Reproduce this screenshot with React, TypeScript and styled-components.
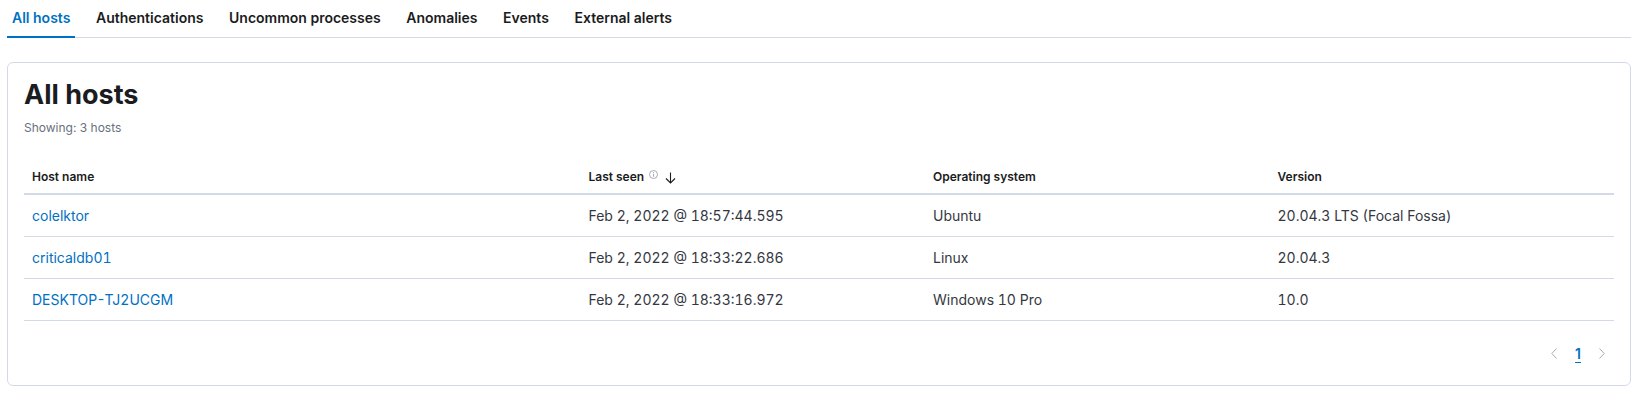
import React from "react";
import styled, { createGlobalStyle } from "styled-components";

const GlobalStyle = createGlobalStyle`
  body {
    margin: 0;
    background: #ffffff;
    font-family: Inter, "Noto Sans", "Liberation Sans", sans-serif;
    color: #1a1c21;
  }
`;

const tabs = [
  "All hosts",
  "Authentications",
  "Uncommon processes",
  "Anomalies",
  "Events",
  "External alerts",
];

const hosts = [
  {
    name: "colelktor",
    lastSeen: "Feb 2, 2022 @ 18:57:44.595",
    os: "Ubuntu",
    version: "20.04.3 LTS (Focal Fossa)",
  },
  {
    name: "criticaldb01",
    lastSeen: "Feb 2, 2022 @ 18:33:22.686",
    os: "Linux",
    version: "20.04.3",
  },
  {
    name: "DESKTOP-TJ2UCGM",
    lastSeen: "Feb 2, 2022 @ 18:33:16.972",
    os: "Windows 10 Pro",
    version: "10.0",
  },
];

export default function App() {
  return (
    <Page>
      <GlobalStyle />
      <TabBar>
        {tabs.map((tab, i) => (
          <Tab key={tab} $selected={i === 0}>
            {tab}
          </Tab>
        ))}
      </TabBar>

      <Panel>
        <Title>All hosts</Title>
        <Subtitle>Showing: 3 hosts</Subtitle>

        <Table>
          <colgroup>
            <col style={{ width: "35%" }} />
            <col />
            <col />
            <col />
          </colgroup>
          <thead>
            <tr>
              <HeadCell>Host name</HeadCell>
              <HeadCell>
                <HeadInner>
                  Last seen
                  <InfoIcon />
                  <SortArrow />
                </HeadInner>
              </HeadCell>
              <HeadCell>Operating system</HeadCell>
              <HeadCell>Version</HeadCell>
            </tr>
          </thead>
          <tbody>
            {hosts.map((h) => (
              <tr key={h.name}>
                <Cell>
                  <HostLink href="#">{h.name}</HostLink>
                </Cell>
                <Cell>{h.lastSeen}</Cell>
                <Cell>{h.os}</Cell>
                <Cell>{h.version}</Cell>
              </tr>
            ))}
          </tbody>
        </Table>

        <Pagination>
          <PageArrow aria-label="Previous page">
            <svg width="6" height="11" viewBox="0 0 6 11">
              <path d="M5.5 0.5 L0.8 5.5 L5.5 10.5" fill="none" stroke="currentColor" strokeWidth="1" />
            </svg>
          </PageArrow>
          <PageNumber>1</PageNumber>
          <PageArrow aria-label="Next page">
            <svg width="6" height="11" viewBox="0 0 6 11">
              <path d="M0.5 0.5 L5.2 5.5 L0.5 10.5" fill="none" stroke="currentColor" strokeWidth="1" />
            </svg>
          </PageArrow>
        </Pagination>
      </Panel>
    </Page>
  );
}

function InfoIcon() {
  return (
    <InfoWrap>
      <svg width="9" height="9" viewBox="0 0 9 9">
        <circle cx="4.5" cy="4.5" r="4" fill="none" stroke="currentColor" strokeWidth="0.9" />
        <rect x="4.05" y="3.7" width="0.9" height="3" fill="currentColor" />
        <rect x="4.05" y="2.1" width="0.9" height="0.9" fill="currentColor" />
      </svg>
    </InfoWrap>
  );
}

function SortArrow() {
  return (
    <ArrowWrap>
      <svg width="11" height="12" viewBox="0 0 11 12">
        <path d="M5.5 0.5 V11" stroke="currentColor" strokeWidth="1.1" fill="none" />
        <path d="M1 6.5 L5.5 11 L10 6.5" stroke="currentColor" strokeWidth="1.1" fill="none" />
      </svg>
    </ArrowWrap>
  );
}

const Page = styled.div`
  padding: 0 8px 0 7px;
`;

const TabBar = styled.div`
  display: flex;
  gap: 15.6px;
  height: 38px;
  box-shadow: inset 0 -1px 0 #d3dae6;
`;

const Tab = styled.div<{ $selected?: boolean }>`
  height: 38px;
  box-sizing: border-box;
  padding: 0 5px;
  line-height: 36px;
  font-size: 14px;
  font-weight: 600;
  color: ${(p) => (p.$selected ? "#0071c2" : "#1a1c21")};
  border-bottom: 2px solid ${(p) => (p.$selected ? "#0071c2" : "transparent")};
  white-space: nowrap;
`;

const Panel = styled.div`
  margin-top: 24px;
  border: 1px solid #d3dae6;
  border-radius: 6px;
  padding: 16px;
  background: #fff;
`;

const Title = styled.h2`
  margin: 0;
  font-size: 27px;
  line-height: 32px;
  font-weight: 700;
  color: #1a1c21;
`;

const Subtitle = styled.div`
  margin-top: 9px;
  font-size: 12px;
  line-height: 16px;
  color: #69707d;
`;

const Table = styled.table`
  margin-top: 23px;
  width: 100%;
  table-layout: fixed;
  border-collapse: collapse;
`;

const HeadCell = styled.th`
  text-align: left;
  padding: 9px 8px 7px;
  font-size: 12px;
  line-height: 18px;
  font-weight: 600;
  color: #1a1c21;
  border-bottom: 2px solid #d3dae6;
`;

const HeadInner = styled.span`
  display: inline-flex;
  align-items: center;
`;

const InfoWrap = styled.span`
  display: inline-flex;
  margin-left: 5px;
  margin-top: -5px;
  color: #98a2b3;
`;

const ArrowWrap = styled.span`
  display: inline-flex;
  margin-left: 7px;
  margin-top: 2px;
  color: #1a1c21;
`;

const Cell = styled.td`
  padding: 10px 8px;
  font-size: 14px;
  line-height: 21px;
  color: #343741;
  font-variant-numeric: tabular-nums;
  border-bottom: 1px solid #d3dae6;
  white-space: nowrap;
`;

const HostLink = styled.a`
  color: #0071c2;
  text-decoration: none;
`;

const Pagination = styled.div`
  margin-top: 16px;
  display: flex;
  justify-content: flex-end;
  align-items: center;
  height: 32px;
`;

const PageArrow = styled.button`
  width: 24px;
  height: 32px;
  display: flex;
  align-items: center;
  justify-content: center;
  padding: 0;
  border: none;
  background: none;
  color: #a2abba;
`;

const PageNumber = styled.button`
  width: 24px;
  height: 32px;
  padding: 0;
  border: none;
  background: none;
  font-family: inherit;
  font-size: 14px;
  font-weight: 600;
  color: #0071c2;
  text-decoration: underline;
  text-underline-offset: 3px;
`;
